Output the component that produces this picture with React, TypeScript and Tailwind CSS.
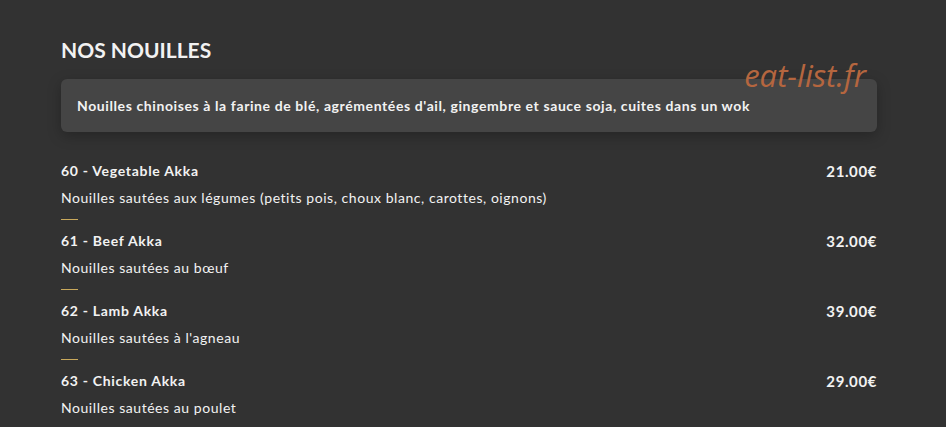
const items = [
  { n: "60 - Vegetable Akka", d: "Nouilles sautées aux légumes (petits pois, choux blanc, carottes, oignons)", p: "21.00€" },
  { n: "61 - Beef Akka", d: "Nouilles sautées au bœuf", p: "32.00€" },
  { n: "62 - Lamb Akka", d: "Nouilles sautées à l'agneau", p: "39.00€" },
  { n: "63 - Chicken Akka", d: "Nouilles sautées au poulet", p: "29.00€" },
];

export default function App() {
  return (
    <div className="h-[427px] w-[946px] overflow-hidden bg-[#323232] font-['Lato',sans-serif] text-[#f2f2f2]">
      <div className="relative ml-[61px] w-[816px] pt-[38px]">
        <h2 className="text-[21px] font-bold leading-[24px]">NOS NOUILLES</h2>
        <div className="mt-[17px] flex h-[53px] items-center rounded-md bg-[#454545] px-4 shadow-[0_4px_14px_rgba(0,0,0,0.25)]">
          <p className="text-[14px] font-bold tracking-[0.6px]">
            Nouilles chinoises à la farine de blé, agrémentées d'ail, gingembre et sauce soja, cuites dans un wok
          </p>
        </div>
        <span className="absolute right-[11px] top-[60px] font-['Open_Sans',sans-serif] text-[31px] font-normal italic leading-none text-[#b5663f]">
          eat-list.fr
        </span>
        <div className="mt-[29px] flex flex-col">
          {items.map((it, i) => (
            <div key={it.n} className="flex flex-col">
              {i > 0 && <div className="mb-[11px] mt-[11px] h-px w-[17px] bg-[#c9a95c]" />}
              <div className="flex items-start justify-between">
                <div className="text-[14px] font-bold leading-5 tracking-[0.7px]">{it.n}</div>
                <div className="text-[15px] font-bold leading-5 tracking-[0.6px]">{it.p}</div>
              </div>
              <div className="mt-[7px] text-[14px] leading-5 tracking-[0.55px]">{it.d}</div>
            </div>
          ))}
        </div>
      </div>
    </div>
  );
}
